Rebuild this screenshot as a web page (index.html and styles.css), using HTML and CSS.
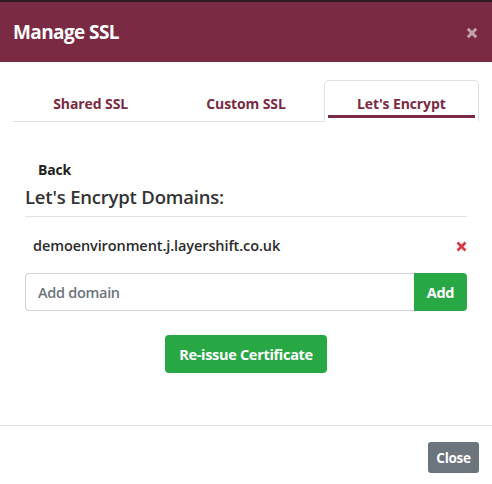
FILE: index.html
```html
<!DOCTYPE html>
<html>
<head>
<meta charset="utf-8">
<link rel="stylesheet" href="styles.css">
</head>
<body>
<div class="modal">
  <div class="modal-header">
    <h1 class="modal-title">Manage SSL</h1>
    <svg class="close-x" width="12" height="12" viewBox="0 0 12 12"><path d="M1.8 1.8 L10.2 10.2 M10.2 1.8 L1.8 10.2" stroke="#c4a2ad" stroke-width="3"/></svg>
  </div>
  <div class="modal-body">
    <ul class="tabs">
      <li class="tab">Shared SSL</li>
      <li class="tab">Custom SSL</li>
      <li class="tab active"><span class="tab-label">Let's Encrypt</span></li>
    </ul>
    <div class="pane">
      <div class="back">Back</div>
      <h2 class="domains-title">Let's Encrypt Domains:</h2>
      <div class="domain-row">
        <span class="domain">demoenvironment.j.layershift.co.uk</span>
        <svg class="remove" width="11" height="11" viewBox="0 0 11 11"><path d="M1.5 1.5 L9.5 9.5 M9.5 1.5 L1.5 9.5" stroke="#dc3545" stroke-width="2.6"/></svg>
      </div>
      <div class="input-group">
        <input class="domain-input" type="text" placeholder="Add domain">
        <button class="btn btn-green btn-add">Add</button>
      </div>
      <div class="reissue-wrap">
        <button class="btn btn-green btn-reissue">Re-issue Certificate</button>
      </div>
    </div>
  </div>
  <div class="modal-footer">
    <button class="btn btn-grey">Close</button>
  </div>
</div>
</body>
</html>
```

FILE: styles.css
```css
* { box-sizing: border-box; }
html, body { margin: 0; padding: 0; background: #fff; }
body { font-family: "Open Sans", "Liberation Sans", sans-serif; color: #333; }

.modal { width: 492px; height: 484px; background: #fff; border-top: 2px solid #2b1b22; }

.modal-header {
  height: 60px;
  background: #7a2a42;
  display: flex;
  align-items: center;
  justify-content: space-between;
  padding: 0 14px 0 13px;
}
.modal-title { margin: 0; color: #fff; font-size: 19px; font-weight: 700; letter-spacing: -0.6px; }
.close-x { display: block; margin-top: 2px; }

.modal-body { padding: 18px 13px 0; }

.tabs {
  list-style: none;
  margin: 0;
  padding: 0;
  display: flex;
  border-bottom: 1px solid #dee2e6;
  height: 42px;
}
.tab {
  flex: 1 1 0;
  text-align: center;
  color: #7a2a42;
  font-weight: 700;
  font-size: 14px;
  letter-spacing: -0.1px;
  padding-top: 13px;
  border: 1px solid transparent;
  border-top-left-radius: 5px;
  border-top-right-radius: 5px;
  margin-bottom: -1px;
}
.tab.active {
  border-color: #dee2e6;
  border-bottom-color: #fff;
  background: #fff;
}
.tab-label {
  display: block;
  height: 24px;
  margin: 0 3px;
  border-bottom: 3px solid #7a2a42;
}

.pane { padding: 0 12px; }

.back { margin: 38px 0 0 13px; font-weight: 700; font-size: 14px; color: #222; line-height: 20px; letter-spacing: -0.2px; }

.domains-title {
  margin: 5px 0 0;
  font-size: 18.5px;
  font-weight: 600;
  color: #333;
  line-height: 24px;
  padding-bottom: 7px;
  border-bottom: 1px solid #e3e3e3;
  letter-spacing: -0.2px;
}

.domain-row {
  display: flex;
  justify-content: space-between;
  align-items: center;
  padding: 16px 0 0 8px;
  height: 40px;
}
.domain { font-size: 14.5px; font-weight: 600; color: #2b2b2b; letter-spacing: -0.1px; }
.remove { display: block; margin-top: 2px; }

.input-group { display: flex; margin-top: 16px; height: 38px; }
.domain-input {
  flex: 1;
  min-width: 0;
  height: 38px;
  border: 1px solid #ced4da;
  border-right: none;
  border-radius: 4px 0 0 4px;
  padding: 0 12px;
  font-family: inherit;
  font-size: 14.5px;
  font-weight: 600;
  letter-spacing: -0.3px;
  outline: none;
}
.domain-input::placeholder { color: #6c757d; opacity: 1; }

.btn {
  font-family: inherit;
  font-weight: 700;
  color: #fff;
  border: none;
  cursor: pointer;
  letter-spacing: -0.3px;
}
.btn-green { background: #28a745; }
.btn-add { width: 53px; height: 38px; border-radius: 0 4px 4px 0; font-size: 14.5px; padding: 0; }

.reissue-wrap { display: flex; justify-content: center; margin-top: 24px; }
.btn-reissue { width: 162px; height: 38px; border-radius: 4px; font-size: 14.5px; padding: 0; }

.modal-footer {
  margin-top: 52px;
  border-top: 1px solid #e0e0e0;
  display: flex;
  justify-content: flex-end;
  padding: 16px 13px 0;
}
.btn-grey { background: #6c757d; width: 51px; height: 31px; border-radius: 3px; font-size: 13.5px; padding: 0; }
```
